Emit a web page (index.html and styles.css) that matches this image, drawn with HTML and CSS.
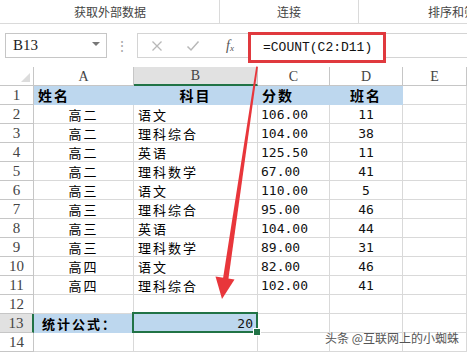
FILE: index.html
```html
<!DOCTYPE html>
<html lang="zh">
<head>
<meta charset="utf-8">
<link rel="stylesheet" href="styles.css">
</head>
<body>
<div class="app">
  <div class="ribbon">
    <div class="grp g1">获取外部数据</div>
    <div class="grp g2">连接</div>
    <div class="grp g3">排序和筛选</div>
  </div>
  <div class="fbar">
    <div class="namebox"><span>B13</span><i class="caret"></i></div>
    <div class="dots">⋮</div>
    <div class="fxbox">
      <svg class="ico" width="12" height="12" viewBox="0 0 12 12"><path d="M1.5 1.5 L10.5 10.5 M10.5 1.5 L1.5 10.5" stroke="#b8b8b8" stroke-width="1.3" fill="none"/></svg>
      <svg class="ico" width="14" height="12" viewBox="0 0 14 12"><path d="M1.5 6.5 L5 10 L12.5 1.5" stroke="#b8b8b8" stroke-width="1.5" fill="none"/></svg>
      <span class="fx">f<sub>x</sub></span>
    </div>
    <div class="formula">=COUNT(C2:D11)</div>
    <div class="frest"></div>
  </div>
  <div class="sheet">
    <div class="c corner"><i></i></div>
    <div class="c ch">A</div>
    <div class="c ch sel">B</div>
    <div class="c ch">C</div>
    <div class="c ch">D</div>
    <div class="c ch">E</div>

    <div class="c rh">1</div>
    <div class="c hd zh l">姓名</div>
    <div class="c hd zh m">科目</div>
    <div class="c hd zh l">分数</div>
    <div class="c hd zh m">班名</div>
    <div class="c"></div>

    <div class="c rh">2</div><div class="c zh m">高二</div><div class="c zh l">语文</div><div class="c num">106.00</div><div class="c num m">11</div><div class="c"></div>
    <div class="c rh">3</div><div class="c zh m">高二</div><div class="c zh l">理科综合</div><div class="c num">104.00</div><div class="c num m">38</div><div class="c"></div>
    <div class="c rh">4</div><div class="c zh m">高二</div><div class="c zh l">英语</div><div class="c num">125.50</div><div class="c num m">11</div><div class="c"></div>
    <div class="c rh">5</div><div class="c zh m">高二</div><div class="c zh l">理科数学</div><div class="c num">67.00</div><div class="c num m">41</div><div class="c"></div>
    <div class="c rh">6</div><div class="c zh m">高三</div><div class="c zh l">语文</div><div class="c num">110.00</div><div class="c num m">5</div><div class="c"></div>
    <div class="c rh">7</div><div class="c zh m">高三</div><div class="c zh l">理科综合</div><div class="c num">95.00</div><div class="c num m">46</div><div class="c"></div>
    <div class="c rh">8</div><div class="c zh m">高三</div><div class="c zh l">英语</div><div class="c num">104.00</div><div class="c num m">44</div><div class="c"></div>
    <div class="c rh">9</div><div class="c zh m">高三</div><div class="c zh l">理科数学</div><div class="c num">89.00</div><div class="c num m">31</div><div class="c"></div>
    <div class="c rh">10</div><div class="c zh m">高四</div><div class="c zh l">语文</div><div class="c num">82.00</div><div class="c num m">46</div><div class="c"></div>
    <div class="c rh">11</div><div class="c zh m">高四</div><div class="c zh l">理科综合</div><div class="c num">102.00</div><div class="c num m">41</div><div class="c"></div>
    <div class="c rh">12</div><div class="c"></div><div class="c"></div><div class="c"></div><div class="c"></div><div class="c"></div>
    <div class="c rh rsel">13</div><div class="c hd zh l sum">统计公式：</div><div class="c active num r">20</div><div class="c"></div><div class="c"></div><div class="c"></div>
    <div class="c rh">14</div><div class="c"></div><div class="c"></div><div class="c"></div><div class="c"></div><div class="c"></div>
  </div>
  <svg class="arrow" width="467" height="352" viewBox="0 0 467 352">
    <polygon points="256.2,66.5 257.9,66.7 228.2,280.5 222.8,279.7" fill="#e8363b"/>
    <polygon points="215.5,276.5 234.5,279.5 222,299" fill="#e8363b"/>
  </svg>
  <div class="mark">头条 @互联网上的小蜘蛛</div>
</div>
</body>
</html>
```
FILE: styles.css
```css
* { box-sizing: border-box; }
html, body { margin: 0; padding: 0; background: #fff; }
.app {
  position: relative;
  width: 467px;
  height: 352px;
  overflow: hidden;
  font-family: "Noto Sans CJK SC", "Noto Sans", sans-serif;
  color: #000;
}
.ribbon {
  display: flex;
  height: 24px;
  border-bottom: 1px solid #dadada;
  font-size: 12px;
  color: #444;
  line-height: 23px;
}
.grp { white-space: nowrap; overflow: hidden; }
.g1 { width: 220px; text-align: center; border-right: 1px solid #dadada; padding-left: 1px; }
.g2 { width: 139px; text-align: center; border-right: 1px solid #dadada; }
.g3 { flex: 1; padding-left: 69px; }

.fbar {
  display: flex;
  align-items: flex-start;
  height: 43px;
  padding-top: 9px;
}
.namebox {
  margin-left: 5px;
  width: 102px;
  height: 25px;
  border: 1px solid #c6c6c6;
  display: flex;
  align-items: center;
  justify-content: space-between;
  padding: 0 6px 0 7px;
  font-family: "Liberation Serif", serif;
  font-size: 15px;
  color: #222;
}
.caret {
  width: 0; height: 0;
  border-left: 4px solid transparent;
  border-right: 4px solid transparent;
  border-top: 4px solid #777;
  margin-top: -3px;
}
.dots {
  width: 30px;
  text-align: center;
  color: #a8a8a8;
  font-size: 14px;
  line-height: 25px;
}
.fxbox {
  width: 111px;
  height: 25px;
  border: 1px solid #d4d4d4;
  border-right: none;
  display: flex;
  align-items: center;
  padding-left: 13px;
  gap: 23px;
}
.fx {
  font-family: "Liberation Serif", serif;
  font-style: italic;
  font-size: 14px;
  color: #555;
  margin-left: 3px;
}
.fx sub { font-size: 9px; vertical-align: -1px; }
.formula {
  width: 138px;
  height: 31px;
  margin-top: -1px;
  border: 3px solid #e0393e;
  font-family: "Liberation Mono", monospace;
  font-size: 13px;
  line-height: 25px;
  padding-left: 12px;
  color: #111;
}
.frest {
  flex: 1;
  height: 25px;
  border-top: 1px solid #d4d4d4;
  border-bottom: 1px solid #d4d4d4;
}

.sheet {
  display: grid;
  grid-template-columns: 34px 100px 124px 72px 73px 1fr;
  grid-auto-rows: 19px;
}
.c {
  border-right: 1px solid #d9d9d9;
  border-bottom: 1px solid #d9d9d9;
  display: flex;
  align-items: center;
  white-space: nowrap;
  position: relative;
}
.ch, .rh {
  justify-content: center;
  font-family: "Liberation Serif", serif;
  font-size: 15px;
  color: #444;
  border-color: #c6c6c6;
}
.ch { font-size: 14px; padding-top: 1px; }
.corner { border-color: #c6c6c6; }
.corner i {
  position: absolute;
  right: 3px; bottom: 3px;
  width: 0; height: 0;
  border-left: 9px solid transparent;
  border-bottom: 9px solid #dcdcdc;
}
.sel { background: #e1e1e1; border-bottom: 2px solid #217346; }
.rsel { background: #e1e1e1; border-right: 2px solid #217346; }
.zh { font-size: 13px; letter-spacing: 2px; }
.hd {
  font-weight: bold;
  font-size: 14px;
  background: #bdd7ee;
  border-right-color: #bdd7ee;
  border-bottom-color: #bdd7ee;
}
.l { padding-left: 4px; }
.m { justify-content: center; }
.r { justify-content: flex-end; padding-right: 4px; }
.num {
  font-family: "DejaVu Sans Mono", monospace;
  font-size: 13px;
  padding-left: 3px;
  color: #111;
}
.num.m { padding-left: 0; }
.sum { padding-left: 8px; font-size: 13px; }
.active { background: #bdd7ee; }
.active::after {
  content: "";
  position: absolute;
  left: -2px; top: -2px; right: -1px; bottom: -1px;
  border: 2px solid #217346;
}
.active::before {
  content: "";
  position: absolute;
  right: -4px; bottom: -4px;
  width: 6px; height: 6px;
  background: #217346;
  border: 1px solid #fff;
  z-index: 2;
}
.arrow { position: absolute; left: 0; top: 0; pointer-events: none; }
.mark {
  position: absolute;
  left: 325px;
  top: 329px;
  font-size: 12px;
  color: #555;
  text-shadow: 0 0 2px #fff, 0 0 2px #fff;
  white-space: nowrap;
}
```
